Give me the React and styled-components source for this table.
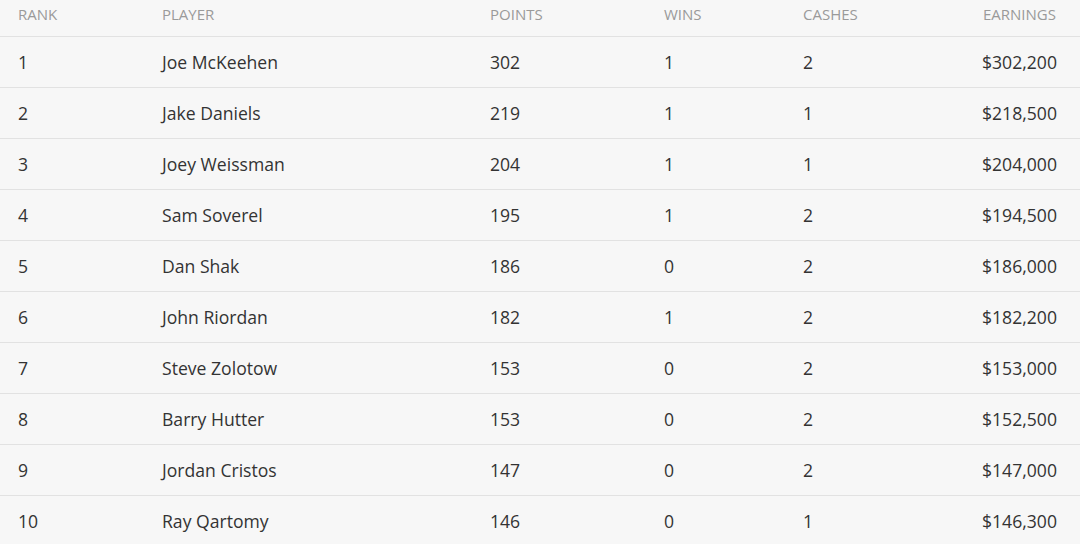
import styled, { createGlobalStyle } from "styled-components";

const GlobalStyle = createGlobalStyle`
    body {
        margin: 0;
        background-color: #f7f7f7;
        font-family: "Open Sans", "Liberation Sans", sans-serif;
    }
`;

const players = [
    { rank: 1, name: "Joe McKeehen", points: 302, wins: 1, cashes: 2, earnings: "$302,200" },
    { rank: 2, name: "Jake Daniels", points: 219, wins: 1, cashes: 1, earnings: "$218,500" },
    { rank: 3, name: "Joey Weissman", points: 204, wins: 1, cashes: 1, earnings: "$204,000" },
    { rank: 4, name: "Sam Soverel", points: 195, wins: 1, cashes: 2, earnings: "$194,500" },
    { rank: 5, name: "Dan Shak", points: 186, wins: 0, cashes: 2, earnings: "$186,000" },
    { rank: 6, name: "John Riordan", points: 182, wins: 1, cashes: 2, earnings: "$182,200" },
    { rank: 7, name: "Steve Zolotow", points: 153, wins: 0, cashes: 2, earnings: "$153,000" },
    { rank: 8, name: "Barry Hutter", points: 153, wins: 0, cashes: 2, earnings: "$152,500" },
    { rank: 9, name: "Jordan Cristos", points: 147, wins: 0, cashes: 2, earnings: "$147,000" },
    { rank: 10, name: "Ray Qartomy", points: 146, wins: 0, cashes: 1, earnings: "$146,300" },
];

export default function App(){
    return(
        <>
        <GlobalStyle/>
        <TABLE>
            <HEADER>
                <HEAD>Rank</HEAD>
                <HEAD>Player</HEAD>
                <HEAD>Points</HEAD>
                <HEAD>Wins</HEAD>
                <HEAD>Cashes</HEAD>
                <HEAD $right>Earnings</HEAD>
            </HEADER>
            {players.map(p => (
                <ROW key={p.rank}>
                    <CELL>{p.rank}</CELL>
                    <CELL>{p.name}</CELL>
                    <CELL>{p.points}</CELL>
                    <CELL>{p.wins}</CELL>
                    <CELL>{p.cashes}</CELL>
                    <CELL $right>{p.earnings}</CELL>
                </ROW>
            ))}
        </TABLE>
        </>
    );
}

const COLUMNS = "144px 328px 174px 139px 179px 1fr";

const TABLE = styled.div`
    width: 1080px;
    background-color: #f7f7f7;
`;
const HEADER = styled.div`
    display: grid;
    grid-template-columns: ${COLUMNS};
    height: 37px;
    align-items: center;
    border-bottom: 1px solid #e2e2e2;
    box-sizing: border-box;
    padding-bottom: 9px;
`;
const HEAD = styled.div`
    padding: 0 18px;
    font-size: 15px;
    color: #9a9a9a;
    text-transform: uppercase;
    white-space: nowrap;
    text-align: ${p => p.$right ? "right" : "left"};
    padding-right: ${p => p.$right ? "24px" : "0"};
`;
const ROW = styled.div`
    display: grid;
    grid-template-columns: ${COLUMNS};
    height: 51px;
    align-items: center;
    border-bottom: 1px solid #e2e2e2;
    box-sizing: border-box;
`;
const CELL = styled.div`
    padding-left: 18px;
    padding-right: ${p => p.$right ? "24px" : "0"};
    font-size: 17.6px;
    color: #333;
    white-space: nowrap;
    text-align: ${p => p.$right ? "right" : "left"};
`;
